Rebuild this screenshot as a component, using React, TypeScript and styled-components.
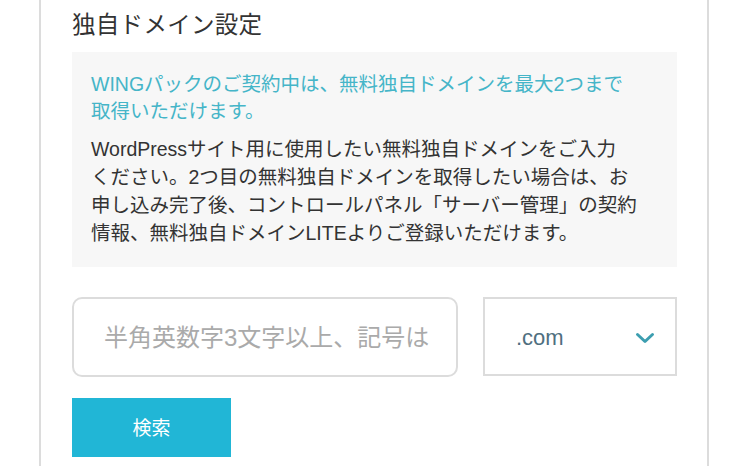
import styled, { createGlobalStyle } from "styled-components";

const GlobalStyle = createGlobalStyle`
  html, body {
    margin: 0;
    padding: 0;
    background: #ffffff;
  }
  body {
    font-family: "Liberation Sans", "Noto Sans CJK JP", sans-serif;
    color: #333333;
  }
`;

const colors = {
  border: "#dcdcdc",
  text: "#333333",
  accent: "#45b5c8",
  button: "#21b6d6",
  panel: "#f7f7f7",
  muted: "#aaaaaa",
};

const Page = styled.div`
  width: 749px;
  height: 466px;
  overflow: hidden;
`;

const Card = styled.section`
  margin-left: 39px;
  width: 670px;
  height: 100%;
  box-sizing: border-box;
  border-left: 2px solid ${colors.border};
  border-right: 2px solid ${colors.border};
  padding: 9px 30px 0 31px;
`;

const Title = styled.h2`
  margin: 0;
  font-size: 23.5px;
  font-weight: 400;
  line-height: 33px;
  letter-spacing: 0.3px;
  color: ${colors.text};
`;

const Notice = styled.div`
  margin-top: 10px;
  background: ${colors.panel};
  padding: 19px 10px 20px 19px;
  white-space: nowrap;
`;

const Lead = styled.p`
  margin: 0;
  font-size: 19.5px;
  line-height: 27px;
  color: ${colors.accent};
`;

const Body = styled.p`
  margin: 10px 0 0;
  font-size: 19.5px;
  line-height: 28px;
  color: ${colors.text};
`;

const FormRow = styled.div`
  display: flex;
  gap: 25px;
  margin-top: 30px;
`;

const DomainInput = styled.input`
  width: 386px;
  height: 80px;
  box-sizing: border-box;
  border: 2px solid ${colors.border};
  border-radius: 10px;
  padding: 2px 12px 0 30px;
  font-family: inherit;
  font-size: 24px;
  color: ${colors.text};
  outline: none;
  &::placeholder {
    color: ${colors.muted};
  }
`;

const TldSelect = styled.div`
  flex: 1;
  height: 79px;
  box-sizing: border-box;
  border: 2px solid ${colors.border};
  display: flex;
  align-items: center;
  justify-content: space-between;
  padding: 3px 20px 0 31px;
  font-size: 22px;
  color: #4f6f80;
  cursor: pointer;
`;

const SearchButton = styled.button`
  display: block;
  margin-top: 21px;
  width: 159px;
  height: 59px;
  border: none;
  padding: 0 0 2px;
  background: ${colors.button};
  color: #ffffff;
  font-family: inherit;
  font-size: 19px;
  cursor: pointer;
`;

function Chevron() {
  return (
    <svg width="20" height="12" viewBox="0 0 20 12" fill="none">
      <path
        d="M2.5 2.5 L10 9.5 L17.5 2.5"
        stroke="#3c9eb0"
        strokeWidth="3"
        strokeLinecap="round"
        strokeLinejoin="round"
      />
    </svg>
  );
}

function App() {
  return (
    <Page>
      <GlobalStyle />
      <Card>
        <Title>独自ドメイン設定</Title>
        <Notice>
          <Lead>
            WINGパックのご契約中は、無料独自ドメインを最大2つまで
            <br />
            取得いただけます。
          </Lead>
          <Body>
            WordPressサイト用に使用したい無料独自ドメインをご入力
            <br />
            ください。2つ目の無料独自ドメインを取得したい場合は、お
            <br />
            申し込み完了後、コントロールパネル「サーバー管理」の契約
            <br />
            情報、無料独自ドメインLITEよりご登録いただけます。
          </Body>
        </Notice>
        <FormRow>
          <DomainInput placeholder="半角英数字3文字以上、記号は" readOnly />
          <TldSelect>
            <span>.com</span>
            <Chevron />
          </TldSelect>
        </FormRow>
        <SearchButton>検索</SearchButton>
      </Card>
    </Page>
  );
}

export default App;
